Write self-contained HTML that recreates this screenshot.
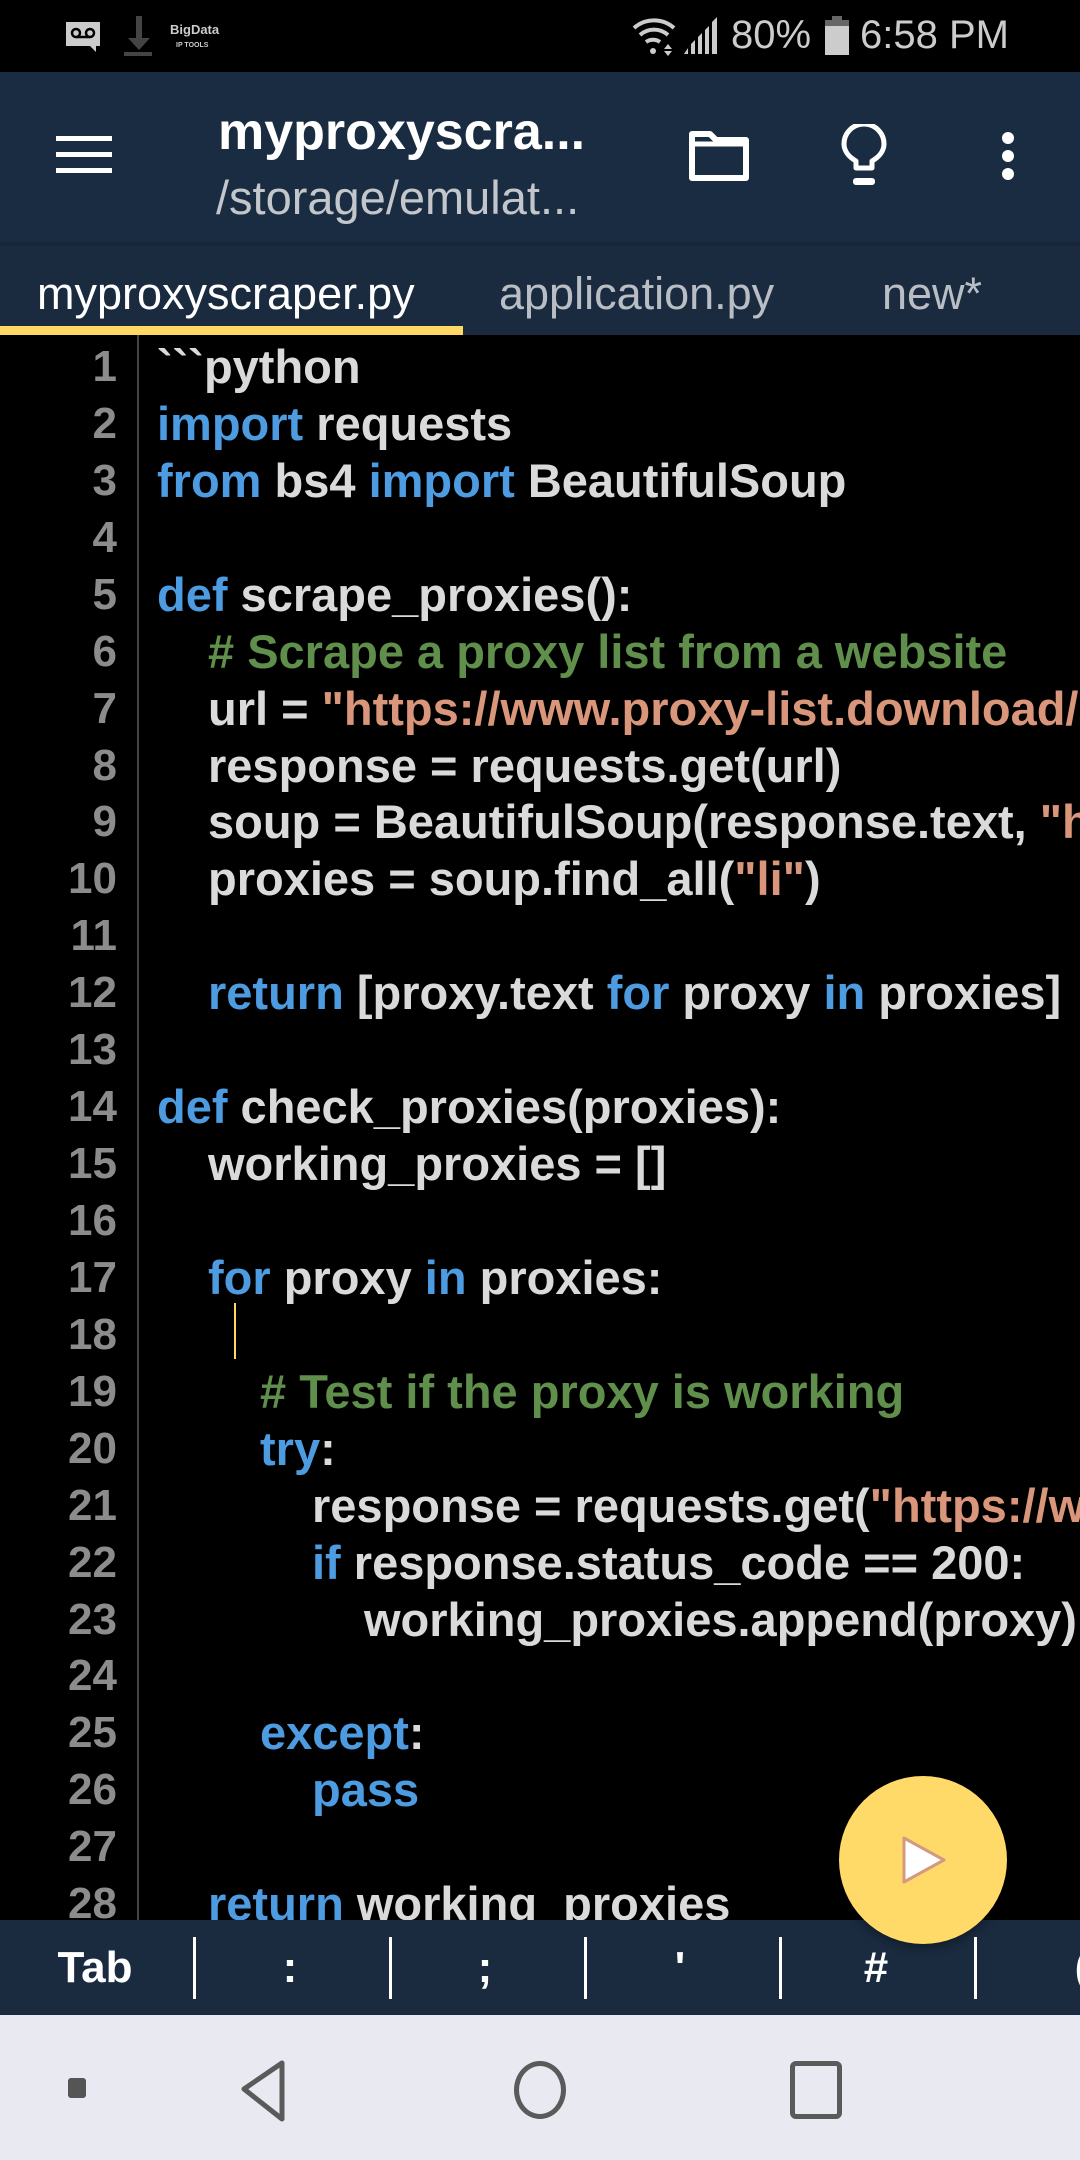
<!DOCTYPE html>
<html><head><meta charset="utf-8"><style>
*{margin:0;padding:0;box-sizing:border-box}
body{width:1080px;height:2160px;overflow:hidden;background:#000;font-family:"Liberation Sans",sans-serif;position:relative}
.abs{position:absolute}
#status{left:0;top:0;width:1080px;height:72px;background:#000}
#toolbar{left:0;top:72px;width:1080px;height:170px;background:#1a2c41}
#tabs{left:0;top:242px;width:1080px;height:93px;background:#1a2b40;border-top:4px solid #16253a}
.tab{position:absolute;top:22px;font-size:45px;color:#b9bec4;white-space:nowrap}
#code{left:0;top:335px;width:1080px;height:1585px;background:#000;overflow:hidden}
#gutter{position:absolute;left:137px;top:0;width:2px;height:100%;background:#444}
.ln{position:absolute;left:0;width:117px;text-align:right;font-size:44px;font-weight:bold;color:#8c8c8c;height:57px;line-height:57px}
.cl{position:absolute;left:157px;font-size:47px;font-weight:bold;color:#dadada;white-space:pre;height:57px;line-height:57px}
.k{color:#4d9be0}.c{color:#5f8f4b}.s{color:#d9967a}
#keys{left:0;top:1920px;width:1080px;height:95px;background:#1a2b40}
.key{position:absolute;top:0;height:95px;line-height:95px;font-size:44px;font-weight:bold;color:#fff;text-align:center}
.sep{position:absolute;top:17px;width:3px;height:62px;background:#fff}
#nav{left:0;top:2015px;width:1080px;height:145px;background:#e8e9f1}
</style></head><body>
<div id="status" class="abs">
  <svg class="abs" style="left:64px;top:20px" width="40" height="32" viewBox="0 0 40 32"><path d="M2 2h34v24h-4v6l-6-6H2z" fill="#ccc"/><circle cx="12" cy="13" r="4" fill="none" stroke="#000" stroke-width="2.5"/><circle cx="26" cy="13" r="4" fill="none" stroke="#000" stroke-width="2.5"/><path d="M12 17h14" stroke="#000" stroke-width="2.5"/></svg>
  <svg class="abs" style="left:122px;top:16px" width="32" height="42" viewBox="0 0 32 42"><path d="M14 0h6v22h8L17 34 6 22h8z" fill="#444"/><rect x="2" y="36" width="28" height="4" fill="#444"/></svg>
  <div class="abs" style="left:170px;top:22px;font-size:13px;font-weight:bold;color:#ccc">BigData</div>
  <div class="abs" style="left:176px;top:42px;font-size:7px;font-weight:bold;color:#ccc">IP TOOLS</div>
  <svg class="abs" style="left:632px;top:16px" width="46" height="40" viewBox="0 0 46 40"><path d="M2 12a30 30 0 0 1 40 0M8 19a21 21 0 0 1 28 0M14 26a12 12 0 0 1 14 0" fill="none" stroke="#ccc" stroke-width="4"/><circle cx="21" cy="35" r="3" fill="#ccc"/><path d="M36 28l4 5h-8zM36 40l4-5h-8z" fill="#ccc"/></svg>
  <svg class="abs" style="left:684px;top:17px" width="38" height="38" viewBox="0 0 38 38"><path d="M0 37h4v-6zM7 37h4V23l-4 4zM14 37h4V16l-4 4zM21 37h4V9l-4 4zM28 37h5V0l-5 5z" fill="#ccc"/></svg>
  <div class="abs" style="left:731px;top:13px;font-size:40px;color:#ccc">80%</div>
  <svg class="abs" style="left:824px;top:16px" width="26" height="40" viewBox="0 0 26 40"><rect x="8" y="0" width="10" height="4" fill="#666"/><rect x="1" y="4" width="24" height="6" fill="#666"/><rect x="1" y="10" width="24" height="29" fill="#ccc"/></svg>
  <div class="abs" style="left:860px;top:13px;font-size:40px;color:#ccc">6:58 PM</div>
</div>
<div id="toolbar" class="abs">
  <div class="abs" style="left:56px;top:64px;width:56px;height:5px;background:#fff"></div>
  <div class="abs" style="left:56px;top:80px;width:56px;height:5px;background:#fff"></div>
  <div class="abs" style="left:56px;top:96px;width:56px;height:5px;background:#fff"></div>
  <div class="abs" style="left:218px;top:30px;font-size:52px;font-weight:bold;color:#fff;white-space:nowrap">myproxyscra...</div>
  <div class="abs" style="left:216px;top:98px;font-size:47px;color:#c3c6cb;white-space:nowrap">/storage/emulat...</div>
  <svg class="abs" style="left:688px;top:58px" width="64" height="52" viewBox="0 0 64 52"><path d="M4 4h18l6 6h30v38H4z" fill="none" stroke="#fff" stroke-width="6" stroke-linejoin="round"/><path d="M4 14h54" stroke="#fff" stroke-width="5"/></svg>
  <svg class="abs" style="left:840px;top:52px" width="48" height="66" viewBox="0 0 48 66"><path d="M16 44v-7C9 33 4 27 4 20A20 20 0 0 1 44 20c0 7-5 13-12 17v7z" fill="none" stroke="#fff" stroke-width="5" stroke-linejoin="round"/><rect x="13" y="54" width="22" height="7" rx="3" fill="#fff"/></svg>
  <div class="abs" style="left:1002px;top:60px;width:12px;height:12px;border-radius:50%;background:#fff"></div>
  <div class="abs" style="left:1002px;top:78px;width:12px;height:12px;border-radius:50%;background:#fff"></div>
  <div class="abs" style="left:1002px;top:96px;width:12px;height:12px;border-radius:50%;background:#fff"></div>
</div>
<div id="tabs" class="abs">
  <div class="tab" style="left:37px;color:#fff">myproxyscraper.py</div>
  <div class="tab" style="left:499px">application.py</div>
  <div class="tab" style="left:882px">new*</div>
  <div class="abs" style="left:0;top:80px;width:463px;height:9px;background:#ffd964"></div>
</div>
<div id="code" class="abs">
  <div id="gutter"></div>
  <div class="ln" style="top:3px">1</div><div class="ln" style="top:60px">2</div><div class="ln" style="top:117px">3</div><div class="ln" style="top:174px">4</div><div class="ln" style="top:231px">5</div><div class="ln" style="top:288px">6</div><div class="ln" style="top:345px">7</div><div class="ln" style="top:402px">8</div><div class="ln" style="top:458px">9</div><div class="ln" style="top:515px">10</div><div class="ln" style="top:572px">11</div><div class="ln" style="top:629px">12</div><div class="ln" style="top:686px">13</div><div class="ln" style="top:743px">14</div><div class="ln" style="top:800px">15</div><div class="ln" style="top:857px">16</div><div class="ln" style="top:914px">17</div><div class="ln" style="top:971px">18</div><div class="ln" style="top:1028px">19</div><div class="ln" style="top:1085px">20</div><div class="ln" style="top:1142px">21</div><div class="ln" style="top:1199px">22</div><div class="ln" style="top:1256px">23</div><div class="ln" style="top:1312px">24</div><div class="ln" style="top:1369px">25</div><div class="ln" style="top:1426px">26</div><div class="ln" style="top:1483px">27</div><div class="ln" style="top:1540px">28</div>
  <div class="cl" style="top:3px">&#96;&#96;&#96;python</div>
  <div class="cl" style="top:60px"><span class="k">import</span> requests</div>
  <div class="cl" style="top:117px"><span class="k">from</span> bs4 <span class="k">import</span> BeautifulSoup</div>
  <div class="cl" style="top:231px"><span class="k">def</span> scrape_proxies():</div>
  <div class="cl" style="top:288px;left:208px"><span class="c"># Scrape a proxy list from a website</span></div>
  <div class="cl" style="top:345px;left:208px">url = <span class="s">"https://www.proxy-list.download/api/v1"</span></div>
  <div class="cl" style="top:402px;left:208px">response = requests.get(url)</div>
  <div class="cl" style="top:458px;left:208px">soup = BeautifulSoup(response.text, <span class="s">"html.parser"</span>)</div>
  <div class="cl" style="top:515px;left:208px">proxies = soup.find_all(<span class="s">"li"</span>)</div>
  <div class="cl" style="top:629px;left:208px"><span class="k">return</span> [proxy.text <span class="k">for</span> proxy <span class="k">in</span> proxies]</div>
  <div class="cl" style="top:743px"><span class="k">def</span> check_proxies(proxies):</div>
  <div class="cl" style="top:800px;left:208px">working_proxies = []</div>
  <div class="cl" style="top:914px;left:208px"><span class="k">for</span> proxy <span class="k">in</span> proxies:</div>
  <div class="abs" style="left:234px;top:968px;width:2px;height:56px;background:#ffd964"></div>
  <div class="cl" style="top:1028px;left:260px"><span class="c"># Test if the proxy is working</span></div>
  <div class="cl" style="top:1085px;left:260px"><span class="k">try</span>:</div>
  <div class="cl" style="top:1142px;left:312px">response = requests.get(<span class="s">"https://www.google.com"</span>)</div>
  <div class="cl" style="top:1199px;left:312px"><span class="k">if</span> response.status_code == 200:</div>
  <div class="cl" style="top:1256px;left:364px">working_proxies.append(proxy)</div>
  <div class="cl" style="top:1369px;left:260px"><span class="k">except</span>:</div>
  <div class="cl" style="top:1426px;left:312px"><span class="k">pass</span></div>
  <div class="cl" style="top:1540px;left:208px"><span class="k">return</span> working_proxies</div>
</div>
<div id="keys" class="abs">
  <div class="key" style="left:40px;width:110px">Tab</div>
  <div class="sep" style="left:193px"></div>
  <div class="key" style="left:250px;width:80px">:</div>
  <div class="sep" style="left:389px"></div>
  <div class="key" style="left:445px;width:80px">;</div>
  <div class="sep" style="left:584px"></div>
  <div class="key" style="left:640px;width:80px">'</div>
  <div class="sep" style="left:779px"></div>
  <div class="key" style="left:836px;width:80px">#</div>
  <div class="sep" style="left:974px"></div>
  <div class="key" style="left:1062px;width:40px">(</div>
</div>
<div class="abs" style="left:839px;top:1776px;width:168px;height:168px;border-radius:50%;background:#ffda68;box-shadow:0 4px 10px rgba(0,0,0,.35)"></div>
<svg class="abs" style="left:898px;top:1833px" width="52" height="54" viewBox="0 0 52 54"><path d="M6 5L46 27 6 49z" fill="#fff" stroke="#d39a80" stroke-width="3" stroke-linejoin="round"/></svg>
<div id="nav" class="abs">
  <div class="abs" style="left:68px;top:63px;width:18px;height:20px;border-radius:3px;background:#555"></div>
  <svg class="abs" style="left:236px;top:44px" width="54" height="64" viewBox="0 0 54 64"><path d="M46 4L8 30l38 30z" fill="none" stroke="#5a5a5a" stroke-width="5" stroke-linejoin="round"/></svg>
  <div class="abs" style="left:514px;top:46px;width:52px;height:58px;border-radius:50%;border:5px solid #5a5a5a"></div>
  <div class="abs" style="left:790px;top:46px;width:52px;height:58px;border-radius:6px;border:5px solid #5a5a5a"></div>
</div>
</body></html>
